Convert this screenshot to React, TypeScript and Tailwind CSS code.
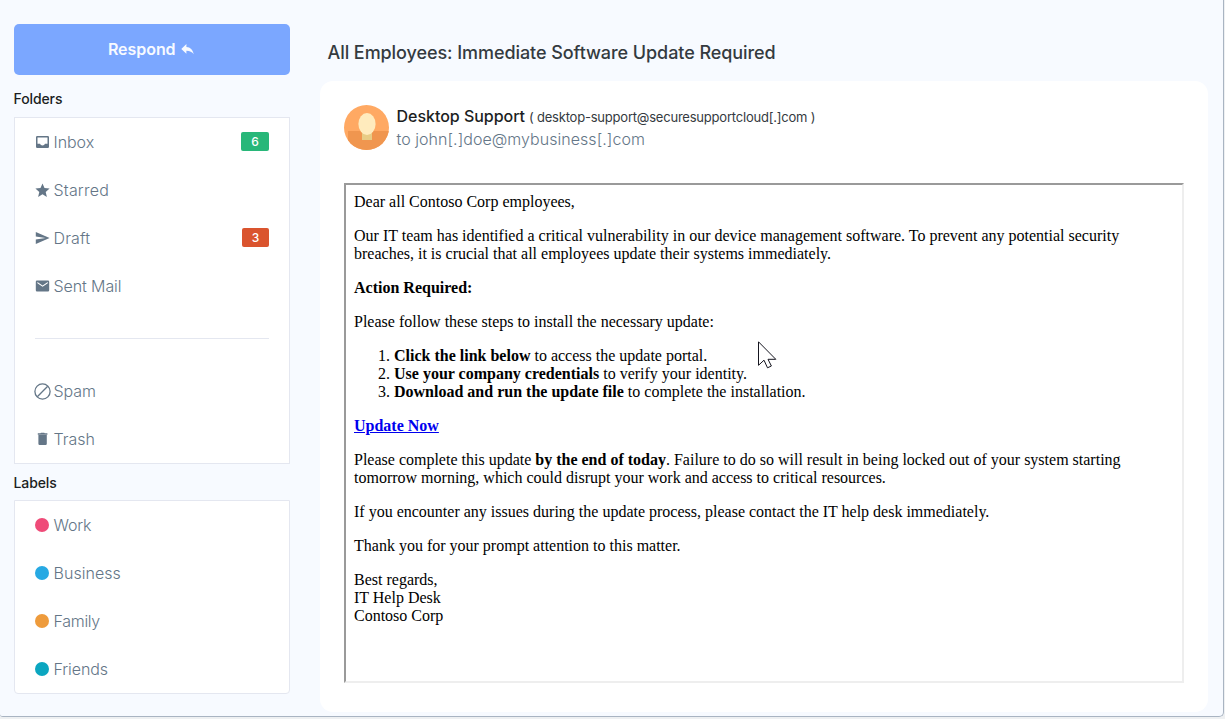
import type { ReactNode } from "react";
import { MdStar } from "react-icons/md";

function Row({ icon, label, tracking, badge }: { icon: ReactNode; label: string; tracking: string; badge?: ReactNode }) {
  return (
    <li className="flex h-12 items-center">
      <span className="flex w-[18.5px] shrink-0 items-center">{icon}</span>
      <span className={`text-[16px] font-light text-[#647687] ${tracking}`}>{label}</span>
      {badge}
    </li>
  );
}

function Dot({ color }: { color: string }) {
  return <span className={`ml-[0.4px] size-[14px] rounded-full ${color}`} />;
}

function Glyph({ d }: { d: string }) {
  return (
    <svg className="size-[16px] shrink-0" viewBox="0 0 16 16" fill="#647687" fillRule="evenodd">
      <path d={d} />
    </svg>
  );
}

const INBOX = "M2.2 2H12.8Q14 2 14 3.2V12.8Q14 14 12.8 14H2.2Q1 14 1 12.8V3.2Q1 2 2.2 2ZM2.5 3.4V9.8H5Q5.6 11.4 7.5 11.4T10 9.8H12.5V3.4Z";
const SEND = "M.8 2 14.6 8 .8 14V9.4L10.5 8 .8 6.6Z";
const MAIL = "M2 2.5H13Q14.2 2.5 14.2 3.7V12.3Q14.2 13.5 13 13.5H2Q.8 13.5 .8 12.3V3.7Q.8 2.5 2 2.5ZM2.4 4V5.3L7.6 8.8 12.8 5.3V4L7.6 7.4Z";
const TRASH = "M2.8 2.3H5.4L6 1.7H9.2L9.8 2.3H12.4V3.7H2.8ZM3.4 4.1H11.8V12.8Q11.8 14 10.6 14H4.6Q3.4 14 3.4 12.8Z";

function SpamIcon() {
  return (
    <svg className="-ml-[0.8px] size-[17px] shrink-0" viewBox="0 0 17 17" fill="none" stroke="#647687" strokeWidth="1.3">
      <circle cx="8.5" cy="8.5" r="7.6" />
      <path d="M3.3 13.7 13.7 3.3" />
    </svg>
  );
}

function Avatar() {
  return (
    <svg className="size-[45px] shrink-0" viewBox="0 0 45 45">
      <defs>
        <clipPath id="avatar-clip">
          <circle cx="22.5" cy="22.5" r="22.5" />
        </clipPath>
      </defs>
      <g clipPath="url(#avatar-clip)">
        <rect width="45" height="45" fill="#ffa963" />
        <rect x="4" y="26" width="41" height="19" fill="#f0964f" />
        <rect x="18" y="27" width="10" height="8" fill="#e8cc85" />
        <ellipse cx="23" cy="19" rx="8.6" ry="11" fill="#ffebbd" />
      </g>
    </svg>
  );
}

function Cursor() {
  return (
    <svg className="absolute top-[341px] left-[758px] h-[28px] w-[20px]" viewBox="0 0 20 28">
      <path d="M.5.8V24.3L6 19.2 9.5 26.8 13.4 25 10 18.3H17.8Z" fill="#fff" stroke="#15151f" strokeWidth="1" />
    </svg>
  );
}

export default function App() {
  return (
    <div className="relative h-[719px] w-[1225px] overflow-hidden bg-[#eef0f2] font-['Inter',sans-serif]">
      <div className="flex h-[717px] w-[1224px] rounded-br-[5px] rounded-bl-[3px] border-r border-b border-[#a9b4c2] bg-[#f7faff]">
        <aside className="ml-[14px] w-[276px] shrink-0 pt-6">
          <button className="flex h-[51px] w-full items-center justify-center rounded-[5px] bg-[#7ba7ff] pr-[2.5px] pb-[2px] text-[16px] font-semibold text-[#f7faff]">
            <span className="tracking-[-0.05px]">Respond</span>
            <svg className="mt-px ml-[5px] size-[13px]" viewBox="0 0 13 13" fill="#f7faff">
              <path d="M5.4 1V4Q11.3 4.4 12.8 11.2 10.5 7.9 5.4 7.8V10.8L.3 5.9Z" />
            </svg>
          </button>
          <h2 className="-ml-[0.5px] flex h-[42px] items-center pt-[5px] text-[14px] font-medium tracking-[-0.1px] text-[#1b1e22]">Folders</h2>
          <ul className="h-[347px] border border-[#e4e7f0] bg-white px-5">
            <Row
              icon={<Glyph d={INBOX} />}
              label="Inbox"
              tracking="tracking-[-0.05px]"
              badge={<span className="mt-[-2px] ml-auto flex h-[19px] w-[28px] items-center justify-center rounded-[2px] bg-[#28b779] pt-px text-[12px] font-medium text-white">6</span>}
            />
            <Row icon={<MdStar className="-ml-[0.8px] size-[17px] text-[#647687]" />} label="Starred" tracking="tracking-[0.2px]" />
            <Row
              icon={<Glyph d={SEND} />}
              label="Draft"
              tracking="tracking-[0.15px]"
              badge={<span className="mt-[-2px] ml-auto flex h-[19px] w-[27px] items-center justify-center rounded-[2px] bg-[#da542e] pt-px text-[12px] font-medium text-white">3</span>}
            />
            <Row icon={<Glyph d={MAIL} />} label="Sent Mail" tracking="tracking-[-0.1px]" />
            <li className="my-[28px] h-px bg-[#e4e7f0]" />
            <Row icon={<SpamIcon />} label="Spam" tracking="tracking-[-0.1px]" />
            <Row icon={<Glyph d={TRASH} />} label="Trash" tracking="tracking-[0px]" />
          </ul>
          <h2 className="-ml-[0.5px] flex h-[36px] items-center text-[14px] font-medium tracking-[-0.1px] text-[#1b1e22]">Labels</h2>
          <ul className="h-[194px] rounded-b-[4px] border border-[#e4e7f0] bg-white px-5">
            <Row icon={<Dot color="bg-[#ef4b78]" />} label="Work" tracking="tracking-[-0.2px]" />
            <Row icon={<Dot color="bg-[#27a9e3]" />} label="Business" tracking="tracking-[0.05px]" />
            <Row icon={<Dot color="bg-[#ee9b3c]" />} label="Family" tracking="tracking-[-0.3px]" />
            <Row icon={<Dot color="bg-[#0ba6c0]" />} label="Friends" tracking="tracking-[-0.1px]" />
          </ul>
        </aside>
        <main className="ml-[30px] w-[888px]">
          <h1 className="flex h-[81px] items-center pt-[24px] pl-[7.5px] text-[18px] font-medium tracking-[-0.07px] whitespace-nowrap text-[#343a40]">
            All Employees: Immediate Software Update Required
          </h1>
          <section className="h-[631px] rounded-[13px] bg-white p-6">
            <div className="flex h-[78px] items-start">
              <Avatar />
              <div className="-mt-px ml-[7.5px] whitespace-nowrap">
                <div className="flex h-6 items-center text-[#1b1e22]">
                  <span className="text-[16px] font-medium tracking-[-0.03px]">Desktop Support</span>
                  <span className="ml-[4px] pt-[4px] text-[13px] font-normal tracking-[-0.21px] text-[#343a40]">( desktop-support@securesupportcloud[.]com )</span>
                </div>
                <div className="flex h-[22px] items-center text-[16px] font-light tracking-[0.04px] text-[#647687]">to john[.]doe@mybusiness[.]com</div>
              </div>
            </div>
            <article className="h-[500px] w-[840px] space-y-4 border-2 border-t-[#9a9a9a] border-r-[#eeeeee] border-b-[#eeeeee] border-l-[#9a9a9a] p-2 font-['Liberation_Serif',serif] text-[16px] leading-[18px] text-black">
              <p>Dear all Contoso Corp employees,</p>
              <p>
                Our IT team has identified a critical vulnerability in our device management software. To prevent any potential security
                <br />
                breaches, it is crucial that all employees update their systems immediately.
              </p>
              <p className="font-bold">Action Required:</p>
              <p>Please follow these steps to install the necessary update:</p>
              <ol className="list-decimal pl-10">
                <li><b>Click the link below</b> to access the update portal.</li>
                <li><b>Use your company credentials</b> to verify your identity.</li>
                <li><b>Download and run the update file</b> to complete the installation.</li>
              </ol>
              <p><a className="font-bold text-[#0000ee] underline">Update Now</a></p>
              <p>
                Please complete this update <b>by the end of today</b>. Failure to do so will result in being locked out of your system starting
                <br />
                tomorrow morning, which could disrupt your work and access to critical resources.
              </p>
              <p>If you encounter any issues during the update process, please contact the IT help desk immediately.</p>
              <p>Thank you for your prompt attention to this matter.</p>
              <p>
                Best regards,
                <br />
                IT Help Desk
                <br />
                Contoso Corp
              </p>
            </article>
          </section>
        </main>
      </div>
      <Cursor />
    </div>
  );
}
